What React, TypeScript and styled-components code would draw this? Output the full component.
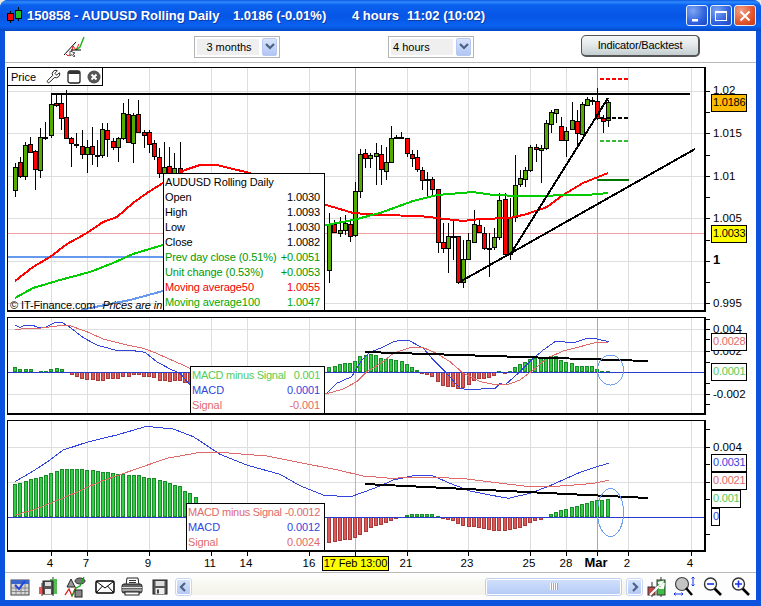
import React from 'react'
import styled, {createGlobalStyle} from 'styled-components'
import {Wrench} from 'lucide-react'

const GlobalStyle = createGlobalStyle`
  html, body {
    margin: 0;
    padding: 0;
    background: #e8e8e0;
  }
  * {
    box-sizing: border-box;
  }
`

const Window = styled.div`
  width: 761px;
  height: 606px;
  display: flex;
  flex-direction: column;
  overflow: hidden;
  background: #0b52dc;
  border-radius: 8px 8px 0 0;
  font-family: "Liberation Sans", Arial, sans-serif;
  font-size: 11px;
  color: #000;
`
const TitleBar = styled.div`
  height: 31px;
  flex: none;
  display: flex;
  align-items: center;
  padding: 0 5px 0 7px;
  background: linear-gradient(180deg, #0a58e4 0, #2f8bfb 2px, #0a60ee 5px, #0656e6 16px, #0a62f0 26px, #0347c4 31px);
`
const TitleText = styled.span<{$width: number}>`
  width: ${p => p.$width}px;
  flex: none;
  color: #fff;
  font-size: 13px;
  font-weight: 700;
  white-space: nowrap;
  text-shadow: 1px 1px 0 #0a3aa8;
`
const CaptionButtons = styled.div`
  margin-left: auto;
  display: flex;
  gap: 2px;
`
const CaptionButton = styled.div<{$close?: boolean}>`
  width: 22px;
  height: 21px;
  display: flex;
  align-items: center;
  justify-content: center;
  border: 1px solid #e8f0ff;
  border-radius: 3px;
  background: ${p => p.$close
    ? 'radial-gradient(circle at 30% 25%, #f0a088, #e0552c 60%, #c23a14)'
    : 'radial-gradient(circle at 30% 25%, #7ea6f2, #2f62dc 60%, #1c46c4)'};
`
const Body = styled.div`
  flex: 1;
  display: flex;
  flex-direction: column;
  margin: 0 5px 6px;
  background: #fff;
`
const Toolbar = styled.div`
  height: 32px;
  flex: none;
  display: flex;
  align-items: center;
  padding-left: 58px;
  border-bottom: 1px solid #b8b8b8;
`
const Select = styled.div<{$margin: number}>`
  width: 86px;
  height: 22px;
  margin-left: ${p => p.$margin}px;
  display: flex;
  align-items: center;
  gap: 3px;
  padding: 2px;
  border: 1px solid #b4b4b4;
`
const SelectValue = styled.div<{$center?: boolean}>`
  flex: 1;
  height: 16px;
  line-height: 16px;
  padding-left: 2px;
  background: #efefef;
  font-size: 11px;
  text-align: ${p => (p.$center ? 'center' : 'left')};
`
const SelectArrow = styled.div`
  width: 15px;
  height: 18px;
  display: flex;
  align-items: center;
  justify-content: center;
  border-radius: 2px;
  border: 1px solid #b8c8f0;
  background: linear-gradient(180deg, #d8e4fb, #b0c6f4);
`
const BacktestButton = styled.div`
  width: 119px;
  height: 22px;
  margin: -2px 0 0 107px;
  display: flex;
  align-items: center;
  justify-content: center;
  border: 1px solid #555;
  border-right-width: 2px;
  border-bottom-width: 2px;
  border-radius: 5px;
  background: linear-gradient(180deg, #f6f8f8, #dfe5e6 55%, #c4ced0);
  font-size: 11px;
  letter-spacing: -0.15px;
`
const Charts = styled.div`
  flex: none;
  display: flex;
  flex-direction: column;
  gap: 5px;
  padding: 4px 0 0 2px;
`
const ChartRow = styled.div<{$height: number}>`
  position: relative;
  height: ${p => p.$height}px;
  display: flex;
`
const Plot = styled.div`
  position: relative;
  width: 699px;
  height: 100%;
  flex: none;
  overflow: hidden;
  border: solid #000;
  border-width: 1px 2px 2px 1px;
  background: #fff;
`
const PlotSvg = styled.svg`
  display: block;
  width: 100%;
  height: 100%;
  shape-rendering: crispEdges;
`
const AxisSvg = styled.svg`
  display: block;
  width: 48px;
  height: 100%;
  flex: none;
  shape-rendering: crispEdges;
`
const AxisLabel = styled.text<{$bold?: boolean}>`
  font-family: "Liberation Sans", Arial, sans-serif;
  font-size: ${p => (p.$bold ? 13 : 11.5)}px;
  font-weight: ${p => (p.$bold ? 700 : 400)};
  fill: #000;
`
const ValueTag = styled.div<{$top: number; $width: number; $color: string; $bg?: string}>`
  position: absolute;
  left: 704px;
  top: ${p => p.$top}px;
  width: ${p => p.$width}px;
  height: 18px;
  line-height: 15px;
  padding-left: 1px;
  border: 1px solid #000;
  background: ${p => p.$bg || '#fff'};
  color: ${p => p.$color};
  font-size: 11px;
  letter-spacing: -0.2px;
  white-space: nowrap;
  overflow: hidden;
`
const PriceHeader = styled.div`
  position: absolute;
  left: 0;
  top: 0;
  width: 95px;
  height: 18px;
  display: flex;
  align-items: center;
  padding-left: 3px;
  border: solid #000;
  border-width: 0 1px 1px 0;
  background: #fff;
`
const HeaderIcons = styled.div`
  margin-left: 10px;
  display: flex;
  align-items: center;
  gap: 6px;
`
const Copyright = styled.div`
  position: absolute;
  left: 2px;
  bottom: -1px;
  display: flex;
  gap: 7px;
  font-size: 11px;
  letter-spacing: -0.1px;
  white-space: nowrap;
`
const Prices = styled.span`
  font-style: italic;
`
const DataBox = styled.div<{$left: number; $top: number; $width: number}>`
  position: absolute;
  left: ${p => p.$left}px;
  top: ${p => p.$top}px;
  width: ${p => p.$width}px;
  bottom: 0;
  padding: 1px 4px 0 1px;
  border: 1px solid #000;
  border-bottom: 0;
  background: #fff;
`
const DataRow = styled.div<{$color?: string; $tight?: boolean}>`
  height: 15px;
  line-height: 15px;
  display: flex;
  justify-content: space-between;
  color: ${p => p.$color || '#000'};
  letter-spacing: ${p => (p.$tight ? -0.28 : -0.1)}px;
  white-space: nowrap;
`
const TimeRow = styled.div`
  position: relative;
  height: 20px;
  flex: none;
`
const TimeTag = styled.div`
  position: absolute;
  left: 317px;
  top: 4px;
  width: 67px;
  height: 15px;
  line-height: 13px;
  text-align: center;
  border: 1px solid #000;
  background: #ffff00;
  font-size: 11px;
  letter-spacing: -0.1px;
  white-space: nowrap;
`
const Footer = styled.div`
  flex: 1;
  display: flex;
  align-items: center;
  padding-left: 4px;
  border-top: 1px solid #b8b8b8;
  background: #fdfdfd;
`
const ToolIcon = styled.svg<{$gap?: number}>`
  width: 22px;
  height: 22px;
  flex: none;
  margin-right: ${p => p.$gap ?? 6}px;
`
const ScrollBar = styled.div`
  width: 466px;
  height: 16px;
  flex: none;
  margin: 0 4px 0 5px;
  display: flex;
  background: linear-gradient(180deg, #fbfbf6, #f2f2ea);
`
const ScrollButton = styled.div`
  width: 15px;
  flex: none;
  display: flex;
  align-items: center;
  justify-content: center;
  border: 1px solid #fff;
  border-radius: 2px;
  background: linear-gradient(180deg, #d4e2fb, #b4c9f5);
  outline: 1px solid #c8d6f2;
`
const ScrollThumb = styled.div`
  width: 135px;
  margin: 0 6px 0 auto;
  display: flex;
  align-items: center;
  justify-content: center;
  border: 1px solid #fff;
  border-radius: 2px;
  background: linear-gradient(180deg, #cfdffb, #b6cbf6);
  outline: 1px solid #bccdf0;
`
const Grip = styled.div`
  width: 8px;
  height: 7px;
  background: repeating-linear-gradient(90deg, #fff 0 1px, #8ea8e0 1px 2px);
`

type Candle = [number, 'g' | 'r', number, number, number, number]

const candles: Candle[] = [
  [15, 'g', 167, 190, 163, 197], [20, 'r', 162, 176, 157, 178], [25, 'g', 145, 176, 142, 180],
  [30, 'r', 144, 152, 137, 153], [35, 'r', 151, 169, 150, 190], [40, 'g', 137, 170, 128, 178],
  [45, 'g', 137, 138, 122, 140], [51, 'g', 104, 135, 94, 138], [56, 'r', 103, 105, 94, 107],
  [61, 'r', 103, 118, 94, 130], [66, 'r', 117, 138, 90, 139], [71, 'r', 138, 143, 137, 167],
  [76, 'r', 144, 145, 133, 148], [82, 'r', 146, 154, 130, 159], [87, 'g', 147, 154, 140, 173],
  [92, 'r', 146, 154, 127, 165], [97, 'g', 155, 156, 140, 167], [102, 'g', 129, 155, 123, 158],
  [107, 'r', 130, 139, 123, 157], [113, 'r', 141, 147, 138, 150], [118, 'g', 138, 147, 137, 162],
  [123, 'g', 113, 138, 103, 140], [128, 'r', 114, 142, 99, 143], [133, 'g', 115, 143, 113, 163],
  [138, 'r', 114, 132, 100, 133], [144, 'r', 132, 135, 130, 148], [149, 'r', 132, 144, 130, 153],
  [154, 'r', 143, 156, 140, 160], [159, 'r', 157, 173, 148, 178], [164, 'g', 167, 173, 142, 178],
  [169, 'r', 166, 173, 147, 178], [174, 'g', 168, 173, 153, 178], [180, 'r', 168, 173, 142, 178],
  [329, 'g', 224, 270, 213, 283], [334, 'r', 224, 232, 220, 233], [340, 'g', 230, 233, 217, 237],
  [345, 'g', 223, 230, 215, 235], [350, 'r', 224, 236, 220, 242], [355, 'g', 191, 235, 182, 237],
  [360, 'g', 154, 191, 149, 198], [365, 'r', 153, 158, 149, 168], [370, 'g', 155, 158, 153, 168],
  [376, 'g', 153, 156, 143, 185], [381, 'r', 154, 169, 145, 185], [386, 'g', 162, 171, 147, 180],
  [391, 'g', 138, 162, 126, 162], [396, 'g', 137, 138, 135, 139], [401, 'r', 137, 138, 132, 139],
  [407, 'r', 138, 153, 138, 157], [412, 'r', 154, 158, 150, 167], [417, 'r', 157, 169, 150, 172],
  [422, 'r', 170, 180, 167, 190], [427, 'g', 179, 180, 172, 197], [432, 'r', 179, 189, 177, 197],
  [438, 'r', 189, 242, 189, 253], [443, 'r', 242, 248, 223, 253], [448, 'g', 236, 248, 223, 273],
  [453, 'g', 236, 237, 220, 260], [458, 'r', 236, 282, 236, 283], [463, 'g', 259, 282, 240, 288],
  [468, 'g', 240, 259, 233, 260], [474, 'g', 224, 242, 210, 243], [479, 'r', 225, 232, 218, 233],
  [484, 'r', 233, 248, 227, 250], [489, 'g', 248, 249, 233, 277], [494, 'g', 237, 247, 228, 250],
  [499, 'g', 200, 237, 193, 240], [505, 'r', 199, 254, 193, 255], [510, 'g', 217, 254, 198, 260],
  [515, 'g', 185, 217, 155, 222], [520, 'g', 178, 184, 170, 187], [525, 'g', 170, 179, 167, 187],
  [530, 'g', 147, 170, 145, 172], [536, 'r', 147, 149, 144, 162], [541, 'g', 148, 150, 145, 183],
  [546, 'g', 123, 148, 120, 150], [551, 'g', 112, 124, 110, 133], [556, 'g', 109, 113, 109, 123],
  [561, 'r', 126, 140, 117, 140], [566, 'g', 131, 140, 127, 157], [572, 'g', 120, 129, 102, 129],
  [577, 'r', 121, 133, 110, 145], [582, 'g', 104, 134, 102, 135], [587, 'g', 99, 105, 97, 106],
  [592, 'g', 100, 101, 97, 105], [597, 'r', 101, 118, 88, 120], [603, 'r', 118, 121, 115, 133],
  [608, 'g', 102, 120, 100, 127],
]

const macdBars: [number, number[]][] = [
  [0, [15, 9, 9, 9, 0, 3, 3, 9, 12, 9, 0, -9, -15, -21, -25, -25, -28, -28, -21, -22, -22, -14, -16, -9, -9, -14, -15, -18, -27, -27, -30, -27, -27, -32, -36]],
  [61, [15, 18, 24, 27, 27, 33, 48, 51, 54, 51, 42, 39, 38, 36, 33, 24, 15, 6, -3, -9, -15, -30, -42, -45, -45, -51, -48, -40, -27, -21, -21, -18, -12, 3, -3, 3, 15, 24, 30, 39, 42, 42, 42, 48, 48, 36, 30, 27, 18, 18, 18, 18, 9, 3, 3]],
]
const signalBars: [number, number[]][] = [
  [0, [100, 102, 108, 114, 117, 121, 127, 132, 139, 144, 144, 144, 144, 144, 141, 141, 138, 135, 135, 132, 129, 129, 126, 127, 126, 120, 117, 117, 112, 107, 102, 97, 92, 77, 72, 60]],
  [61, [-78, -76, -72, -70, -70, -64, -55, -45, -33, -28, -24, -18, -12, -6, 0, 6, 9, 9, 9, 9, 9, 3, -3, -9, -12, -21, -27, -30, -30, -33, -36, -39, -42, -42, -42, -39, -36, -33, -27, -18, -12, -9, 0, 9, 15, 21, 24, 30, 33, 39, 42, 48, 51, 51, 54]],
]

type Pt = [number, number]

// coordinates below were read off 3x crops, so they are scaled back here
const crop = (ox: number, oy: number, pts: Pt[]) => pts.map(([x, y]) => `${ox + x / 3},${oy + y / 3}`).join(' ')

const vLines = [51, 87, 149, 211, 247, 309, 407, 468, 530, 566, 628, 691]

const Grid = ({rows, top, bottom}: {rows: number[]; top: number; bottom: number}) => <>
  {rows.map(y => <line key={y} x1={8} x2={704} y1={y + 0.5} y2={y + 0.5} stroke="#dedede"/>)}
  {vLines.map(x => <line key={x} x1={x + 0.5} x2={x + 0.5} y1={top} y2={bottom} stroke="#dedede"/>)}
  <line x1={355.5} x2={355.5} y1={top} y2={bottom} stroke="#f0a0a0"/>
  <line x1={597.5} x2={597.5} y1={top} y2={bottom} stroke="#a8a8a8"/>
</>

const Bars = ({groups, base, scale}: {groups: [number, number[]][]; base: number; scale: number}) => <>
  {groups.map(([start, values]) => values.map((v, i) => {
    if (v === 0) return null
    const x = Math.round(15.3 + 5.15 * (start + i)) - 2
    const h = Math.abs(v) / scale
    return <rect
      key={start + i}
      x={x + 0.5}
      y={(v > 0 ? base - h : base) + 0.5}
      width={3}
      height={Math.max(h - 1, 1)}
      fill={v > 0 ? '#33cc44' : '#dd5a5a'}
      stroke={v > 0 ? '#1a8a2a' : '#a83a3a'}
    />
  }))}
</>

const PricePlot = () =>
  <PlotSvg viewBox="8 68 696 242">
    <Grid rows={[91, 133, 176, 218, 261, 303]} top={68} bottom={310}/>
    <line x1={8} x2={704} y1={233.5} y2={233.5} stroke="#f0a0a0"/>
    <line x1={8} x2={163} y1={257} y2={257} stroke="#6699ee" strokeWidth={2}/>
    <line x1={51} x2={690} y1={93.5} y2={93.5} stroke="#000" strokeWidth={2}/>
    <polyline fill="none" stroke="#6699ee" strokeWidth={2} points="81,310 100,306 130,300 163,291"/>
    {candles.map(([x, c, top, bot, wTop, wBot]) => <g key={x}>
      <line x1={x + 0.5} x2={x + 0.5} y1={wTop} y2={wBot} stroke="#000"/>
      <rect x={x - 1.5} y={top + 0.5} width={4} height={bot - top} fill={c === 'g' ? '#55aa00' : '#ff0000'} stroke="#000"/>
    </g>)}
    <polyline fill="none" stroke="#ff0000" strokeWidth={2} points="15,281 33,267 50,257 67,244 87,233 103,222 117,217 133,203 147,193 163,183 185,170 200,165 217,165 233,169 250,173 326,205 340,209 353,213 380,215 420,216 437,218 463,221 480,219 510,218 527,214 547,207 563,195 583,183 598,177 608,173"/>
    <polyline fill="none" stroke="#00cc00" strokeWidth={2} points="15,298 33,288 60,280 90,272 113,263 133,254 163,245 326,225 353,220 380,213 413,201 437,195 473,192 493,195 520,196 587,195 608,193"/>
    <line x1={458} y1={283} x2={695} y2={149} stroke="#000" strokeWidth={2}/>
    <line x1={510} y1={255} x2={608} y2={98} stroke="#000" strokeWidth={2}/>
    <line x1={600} x2={628} y1={78.5} y2={78.5} stroke="#ff0000" strokeWidth={2} strokeDasharray="4 2"/>
    <line x1={600} x2={628} y1={118} y2={118} stroke="#000" strokeWidth={2} strokeDasharray="4 2"/>
    <line x1={600} x2={628} y1={141} y2={141} stroke="#33bb33" strokeWidth={2} strokeDasharray="4 2"/>
    <line x1={597} x2={629} y1={180} y2={180} stroke="#007700" strokeWidth={2}/>
  </PlotSvg>

const MacdPlot = () =>
  <PlotSvg viewBox="8 318 696 95">
    <Grid rows={[329, 351, 394]} top={318} bottom={413}/>
    <Bars groups={macdBars} base={372} scale={3}/>
    <line x1={8} x2={704} y1={372.5} y2={372.5} stroke="#2a3acc"/>
    <polyline fill="none" stroke="#3344dd" points={crop(0, 315, [[45, 30], [60, 37], [75, 30], [95, 30], [115, 37], [135, 37], [165, 22], [185, 22], [210, 37], [250, 68], [290, 90], [345, 105], [385, 105], [435, 112], [470, 140], [510, 162], [540, 175], [570, 210], [978, 237], [1010, 205], [1055, 185], [1085, 135], [1110, 112], [1140, 100]])}/>
    <polyline fill="none" stroke="#3344dd" points={crop(380, 315, [[0, 100], [40, 80], [65, 76], [90, 78], [130, 100], [160, 135], [200, 175], [240, 220], [265, 224], [345, 220], [360, 205], [375, 210], [420, 170], [460, 130], [490, 105], [525, 80], [585, 82], [620, 70], [650, 72], [686, 80]])}/>
    <polyline fill="none" stroke="#e06a6a" points={crop(0, 315, [[45, 45], [75, 40], [115, 40], [180, 32], [210, 32], [260, 50], [310, 72], [380, 90], [430, 100], [470, 115], [510, 133], [560, 155], [575, 165], [978, 237], [1030, 222], [1070, 200], [1100, 170], [1140, 147]])}/>
    <polyline fill="none" stroke="#e06a6a" points={crop(380, 315, [[0, 147], [40, 115], [90, 98], [130, 98], [170, 115], [210, 140], [250, 175], [300, 200], [340, 208], [385, 208], [420, 195], [460, 165], [500, 130], [550, 108], [600, 95], [650, 82], [686, 81]])}/>
    <line x1={365} y1={352} x2={648} y2={361} stroke="#000" strokeWidth={2}/>
    <ellipse cx={610.5} cy={370} rx={13} ry={15} fill="none" stroke="#6fa0f0"/>
  </PlotSvg>

const SignalPlot = () =>
  <PlotSvg viewBox="8 421 696 129">
    <Grid rows={[447, 482]} top={421} bottom={550}/>
    <Bars groups={signalBars} base={517} scale={3}/>
    <line x1={8} x2={704} y1={517.5} y2={517.5} stroke="#2a3acc"/>
    <polyline fill="none" stroke="#3344dd" points={crop(0, 415, [[45, 200], [100, 168], [150, 135], [190, 105], [260, 82], [350, 60], [440, 34], [520, 42], [580, 65], [660, 118], [740, 150], [840, 178], [900, 212], [970, 240], [1050, 246], [1100, 228], [1140, 213]])}/>
    <polyline fill="none" stroke="#3344dd" points={crop(380, 415, [[0, 213], [40, 195], [100, 182], [160, 183], [210, 205], [270, 228], [330, 240], [385, 250], [450, 235], [510, 212], [560, 190], [600, 172], [650, 155], [686, 145]])}/>
    <polyline fill="none" stroke="#e06a6a" points={crop(0, 415, [[45, 300], [100, 285], [200, 245], [300, 200], [400, 165], [500, 130], [600, 112], [660, 112], [800, 123], [900, 143], [1000, 162], [1090, 183], [1140, 187]])}/>
    <polyline fill="none" stroke="#e06a6a" points={crop(380, 415, [[0, 187], [30, 190], [100, 187], [170, 187], [260, 192], [340, 202], [440, 214], [500, 215], [560, 212], [640, 205], [686, 196]])}/>
    <line x1={365} y1={484} x2={648} y2={498} stroke="#000" strokeWidth={2}/>
    <ellipse cx={610.5} cy={512.5} rx={13} ry={24} fill="none" stroke="#6fa0f0"/>
  </PlotSvg>

const Axis = ({top, height, ticks, labels}: {
  top: number
  height: number
  ticks: number[]
  labels: {y: number; text: string; bold?: boolean}[]
}) =>
  <AxisSvg viewBox={`706 ${top} 48 ${height}`}>
    {ticks.map(y => <line key={y} x1={706} x2={710} y1={y + 0.5} y2={y + 0.5} stroke="#000"/>)}
    {labels.map(l => <AxisLabel key={l.text} x={713} y={l.y + 4} $bold={l.bold}>{l.text}</AxisLabel>)}
  </AxisSvg>

const timeLabels: [number, string][] = [
  [50, '4'], [86, '7'], [148, '9'], [210, '11'], [246, '14'], [309, '16'], [406, '21'], [467, '23'], [529, '25'], [566, '28'], [627, '2'], [690, '4'],
]
const timeTicks = [51, 87, 149, 211, 247, 309, 355, 407, 468, 530, 566, 597, 628, 691]

const TimeAxis = () =>
  <PlotSvg viewBox="5 552 751 20">
    {timeTicks.map(x => <line key={x} x1={x + 0.5} x2={x + 0.5} y1={552} y2={556} stroke="#000"/>)}
    {timeLabels.map(([x, t]) => <AxisLabel key={x} x={x} y={567} textAnchor="middle">{t}</AxisLabel>)}
    <AxisLabel x={596} y={567} textAnchor="middle" $bold>Mar</AxisLabel>
  </PlotSvg>

const Arrow = ({dir}: {dir: 'down' | 'left' | 'right'}) => {
  const points = {down: '1,2 5,6 9,2', left: '6,1 2,5 6,9', right: '3,1 7,5 3,9'}[dir]
  return <svg width="10" height="10" viewBox="0 0 10 10">
    <polyline points={points} fill="none" stroke="#4d6185" strokeWidth="2.2"/>
  </svg>
}

const SmallCandles = () =>
  <svg width="15" height="17" viewBox="0 0 15 17" style={{marginRight: 5, flex: 'none'}}>
    <path d="M3.5 4v12M11.5 0v14" stroke="#000"/>
    <rect x="0.5" y="6.5" width="6" height="7" fill="#ff0000" stroke="#000"/>
    <rect x="8.5" y="3.5" width="6" height="8" fill="#22c022" stroke="#000"/>
  </svg>

const WizardIcon = () =>
  <svg width="22" height="22" viewBox="0 0 22 22">
    <path d="M1 19 L13 6" stroke="#000" fill="none"/>
    <path d="M2 17 L5 20 L8 18 L10 10 L13 14 L16 8" stroke="#ee1111" fill="none"/>
    <path d="M13 14 L17 11 L21 1" stroke="#11bb11" fill="none" strokeWidth="1.4"/>
    <path d="M8 14 H18" stroke="#000" fill="none"/>
    <path d="M7 15 L7 20 L9 18.5 L11 21 L12 20 L10 18 L12 17 Z" fill="#fff" stroke="#333" strokeWidth="0.8"/>
  </svg>

const WindowIcon = () =>
  <svg width="14" height="14" viewBox="0 0 14 14">
    <rect x="1" y="1" width="12" height="12" rx="2" fill="#fff" stroke="#222" strokeWidth="1.3"/>
    <rect x="1" y="1" width="12" height="3" fill="#333"/>
  </svg>

const CloseIcon = () =>
  <svg width="14" height="14" viewBox="0 0 14 14">
    <circle cx="7" cy="7" r="6.5" fill="#555"/>
    <path d="M4.5 4.5 L9.5 9.5 M9.5 4.5 L4.5 9.5" stroke="#fff" strokeWidth="2"/>
  </svg>

const CalendarIcon = () =>
  <ToolIcon viewBox="0 0 22 22" $gap={6}>
    <rect x="2" y="4" width="18" height="15" fill="#d8d8d8" stroke="#444"/>
    <rect x="2" y="4" width="18" height="4" fill="#3a66cc"/>
    <path d="M2 12H20M2 15.5H20M7 8V19M12 8V19M16 8V19" stroke="#777" strokeWidth="0.8"/>
    <path d="M6 9 L10 13 L16 5" stroke="#2244dd" strokeWidth="2" fill="none"/>
  </ToolIcon>

const CandleDiskIcon = () =>
  <ToolIcon viewBox="0 0 22 22" $gap={5}>
    <path d="M5 7V20M16 1V20" stroke="#333"/>
    <rect x="2" y="11" width="6" height="7" fill="#ee5555"/>
    <rect x="13" y="3" width="7" height="15" fill="#55bb55"/>
    <rect x="6" y="5" width="10" height="13" fill="#555" stroke="#222"/>
    <rect x="8" y="6" width="6" height="4" fill="#ddd"/>
    <rect x="8" y="13" width="6" height="5" fill="#eee"/>
  </ToolIcon>

const DrawToolsIcon = () =>
  <ToolIcon viewBox="0 0 22 22" $gap={8}>
    <path d="M7 3 L11 11 H3 Z" fill="#999" stroke="#222"/>
    <ellipse cx="16" cy="5" rx="5" ry="3" fill="#777" stroke="#333"/>
    <path d="M1 19 L5 13 L8 20 L12 11" stroke="#dd1111" fill="none" strokeWidth="1.3"/>
    <path d="M8 20 L12 12 L16 10 L20 1" stroke="#11aa11" fill="none" strokeWidth="1.3"/>
    <rect x="11" y="14" width="7" height="7" fill="#888" stroke="#222"/>
  </ToolIcon>

const MailIcon = () =>
  <ToolIcon viewBox="0 0 22 22" $gap={5}>
    <rect x="2" y="5" width="18" height="12" rx="1.5" fill="#fff" stroke="#000" strokeWidth="1.5"/>
    <path d="M2.5 5.5 L11 12 L19.5 5.5 M2.5 16.5 L8.5 10 M19.5 16.5 L13.5 10" stroke="#000" fill="none"/>
  </ToolIcon>

const PrinterIcon = () =>
  <ToolIcon viewBox="0 0 22 22" $gap={6}>
    <path d="M6 2 H17 L18 9 H5 Z" fill="#fff" stroke="#222"/>
    <path d="M8 4.5H15M8 6.5H15" stroke="#333"/>
    <rect x="1" y="8" width="20" height="9" rx="2" fill="#666" stroke="#222"/>
    <path d="M1 11.5H21M1 14H21" stroke="#ddd"/>
    <rect x="4" y="16" width="14" height="3" fill="#fff" stroke="#222"/>
  </ToolIcon>

const DiskIcon = () =>
  <ToolIcon viewBox="0 0 22 22" $gap={0}>
    <rect x="4" y="4" width="14" height="14" fill="#555" stroke="#222"/>
    <rect x="6.5" y="5" width="9" height="5" fill="#ddd"/>
    <rect x="6.5" y="12" width="9" height="6" fill="#eee"/>
    <rect x="8" y="13.5" width="2" height="4" fill="#444"/>
  </ToolIcon>

const CandleWrenchIcon = () =>
  <ToolIcon viewBox="0 0 22 22" $gap={6}>
    <path d="M6 6V21M15 1V21" stroke="#333"/>
    <rect x="2" y="11" width="7" height="8" fill="#cc4444" stroke="#333"/>
    <rect x="11" y="4" width="8" height="15" fill="#44bb44" stroke="#333"/>
    <path d="M4 19 L13 10 M12 7 L16 6 L14 9 L16 10 L18 7 L17 12 L13 12" stroke="#fff" strokeWidth="2" fill="none"/>
  </ToolIcon>

const Magnifier = ({children}: {children?: React.ReactNode}) =>
  <ToolIcon viewBox="0 0 22 22" $gap={6}>
    <line x1="12" y1="12" x2="19" y2="19" stroke="#000" strokeWidth="2.6"/>
    <circle cx="8.5" cy="8" r="6" fill="#fff" stroke="#333" strokeWidth="1.4"/>
    {children}
  </ToolIcon>

const FitZoomIcon = () =>
  <ToolIcon viewBox="0 0 22 22" $gap={6}>
    <circle cx="8" cy="8" r="6.5" fill="#c4c4c4" stroke="#444" strokeWidth="1.2"/>
    <line x1="12" y1="12" x2="18" y2="19" stroke="#000" strokeWidth="2.4"/>
    <path d="M19 1V10M17.5 2.5L19 1L20.5 2.5M17.5 8.5L19 10L20.5 8.5M0 18H9M1.5 16.5L0 18L1.5 19.5M7.5 16.5L9 18L7.5 19.5" stroke="#1133ee" fill="none"/>
  </ToolIcon>

const App = () => {
  return <>
    <GlobalStyle/>
    <Window>
      <TitleBar>
        <SmallCandles/>
        <TitleText $width={206}>150858 - AUDUSD Rolling Daily</TitleText>
        <TitleText $width={119}>1.0186 (-0.01%)</TitleText>
        <TitleText $width={55}>4 hours</TitleText>
        <TitleText $width={100}>11:02 (10:02)</TitleText>
        <CaptionButtons>
          <CaptionButton>
            <svg width="14" height="14" viewBox="0 0 14 14"><rect x="2" y="10" width="6" height="2.5" fill="#fff"/></svg>
          </CaptionButton>
          <CaptionButton>
            <svg width="14" height="14" viewBox="0 0 14 14"><rect x="1.5" y="2.5" width="11" height="9" fill="none" stroke="#fff"/><rect x="1" y="2" width="12" height="2" fill="#fff"/></svg>
          </CaptionButton>
          <CaptionButton $close>
            <svg width="14" height="14" viewBox="0 0 14 14"><path d="M2.5 2.5L11.5 11.5M11.5 2.5L2.5 11.5" stroke="#fff" strokeWidth="2"/></svg>
          </CaptionButton>
        </CaptionButtons>
      </TitleBar>
      <Body>
        <Toolbar>
          <WizardIcon/>
          <Select $margin={109}>
            <SelectValue $center>3 months</SelectValue>
            <SelectArrow><Arrow dir="down"/></SelectArrow>
          </Select>
          <Select $margin={108}>
            <SelectValue>4 hours</SelectValue>
            <SelectArrow><Arrow dir="down"/></SelectArrow>
          </Select>
          <BacktestButton>Indicator/Backtest</BacktestButton>
        </Toolbar>
        <Charts>
          <ChartRow $height={245}>
            <Plot>
              <PricePlot/>
              <PriceHeader>
                Price
                <HeaderIcons>
                  <Wrench size={15} color="#222" strokeWidth={1.6}/>
                  <WindowIcon/>
                  <CloseIcon/>
                </HeaderIcons>
              </PriceHeader>
              <Copyright>
                <span>© IT-Finance.com</span>
                <Prices>Prices are in</Prices>
              </Copyright>
              <DataBox $left={155} $top={105} $width={162}>
                <DataRow>AUDUSD Rolling Daily</DataRow>
                <DataRow><span>Open</span><span>1.0030</span></DataRow>
                <DataRow><span>High</span><span>1.0093</span></DataRow>
                <DataRow><span>Low</span><span>1.0030</span></DataRow>
                <DataRow><span>Close</span><span>1.0082</span></DataRow>
                <DataRow $color="#009900"><span>Prev day close (0.51%)</span><span>+0.0051</span></DataRow>
                <DataRow $color="#009900"><span>Unit change (0.53%)</span><span>+0.0053</span></DataRow>
                <DataRow $color="#ee0000"><span>Moving average50</span><span>1.0055</span></DataRow>
                <DataRow $color="#00aa00"><span>Moving average100</span><span>1.0047</span></DataRow>
              </DataBox>
            </Plot>
            <Axis
              top={67}
              height={245}
              ticks={[91, 112, 133, 155, 176, 197, 218, 240, 261, 282, 303]}
              labels={[
                {y: 90, text: '1.02'},
                {y: 133, text: '1.015'},
                {y: 176, text: '1.01'},
                {y: 218, text: '1.005'},
                {y: 260, text: '1', bold: true},
                {y: 303, text: '0.995'},
              ]}
            />
            <ValueTag $top={27} $width={36} $color="#000" $bg="#ffbb00">1.0186</ValueTag>
            <ValueTag $top={158} $width={36} $color="#000" $bg="#ffff00">1.0033</ValueTag>
          </ChartRow>
          <ChartRow $height={98}>
            <Plot>
              <MacdPlot/>
              <DataBox $left={182} $top={48} $width={135}>
                <DataRow $color="#55cc55" $tight><span>MACD minus Signal</span><span>0.001</span></DataRow>
                <DataRow $color="#3344dd"><span>MACD</span><span>0.0001</span></DataRow>
                <DataRow $color="#e06a6a"><span>Signal</span><span>-0.001</span></DataRow>
              </DataBox>
            </Plot>
            <Axis
              top={317}
              height={98}
              ticks={[319, 329, 339, 351, 362, 383, 394, 404]}
              labels={[
                {y: 329, text: '0.004'},
                {y: 351, text: '0.002'},
                {y: 394, text: '-0.002'},
              ]}
            />
            <ValueTag $top={16} $width={36} $color="#e06a6a">0.0028</ValueTag>
            <ValueTag $top={46} $width={36} $color="#55cc55">0.0001</ValueTag>
          </ChartRow>
          <ChartRow $height={132}>
            <Plot>
              <SignalPlot/>
              <DataBox $left={178} $top={82} $width={139}>
                <DataRow $color="#e06a6a" $tight><span>MACD minus Signal</span><span>-0.0012</span></DataRow>
                <DataRow $color="#3344dd"><span>MACD</span><span>0.0012</span></DataRow>
                <DataRow $color="#e06a6a"><span>Signal</span><span>0.0024</span></DataRow>
              </DataBox>
            </Plot>
            <Axis
              top={420}
              height={132}
              ticks={[429, 447, 464, 482, 499, 534]}
              labels={[{y: 447, text: '0.004'}]}
            />
            <ValueTag $top={34} $width={36} $color="#3344dd">0.0031</ValueTag>
            <ValueTag $top={52} $width={36} $color="#e06a6a">0.0021</ValueTag>
            <ValueTag $top={70} $width={30} $color="#55cc55">0.001</ValueTag>
            <ValueTag $top={88} $width={9} $color="#3344dd">0</ValueTag>
          </ChartRow>
        </Charts>
        <TimeRow>
          <TimeAxis/>
          <TimeTag>17 Feb 13:00</TimeTag>
        </TimeRow>
        <Footer>
          <CalendarIcon/>
          <CandleDiskIcon/>
          <DrawToolsIcon/>
          <MailIcon/>
          <PrinterIcon/>
          <DiskIcon/>
          <ScrollBar>
            <ScrollButton><Arrow dir="left"/></ScrollButton>
            <ScrollThumb><Grip/></ScrollThumb>
            <ScrollButton><Arrow dir="right"/></ScrollButton>
          </ScrollBar>
          <CandleWrenchIcon/>
          <FitZoomIcon/>
          <Magnifier><path d="M5 8H12" stroke="#1133ee" strokeWidth="1.6"/></Magnifier>
          <Magnifier><path d="M5 8H12M8.5 4.5V11.5" stroke="#1133ee" strokeWidth="1.6"/></Magnifier>
        </Footer>
      </Body>
    </Window>
  </>
}

export default App
